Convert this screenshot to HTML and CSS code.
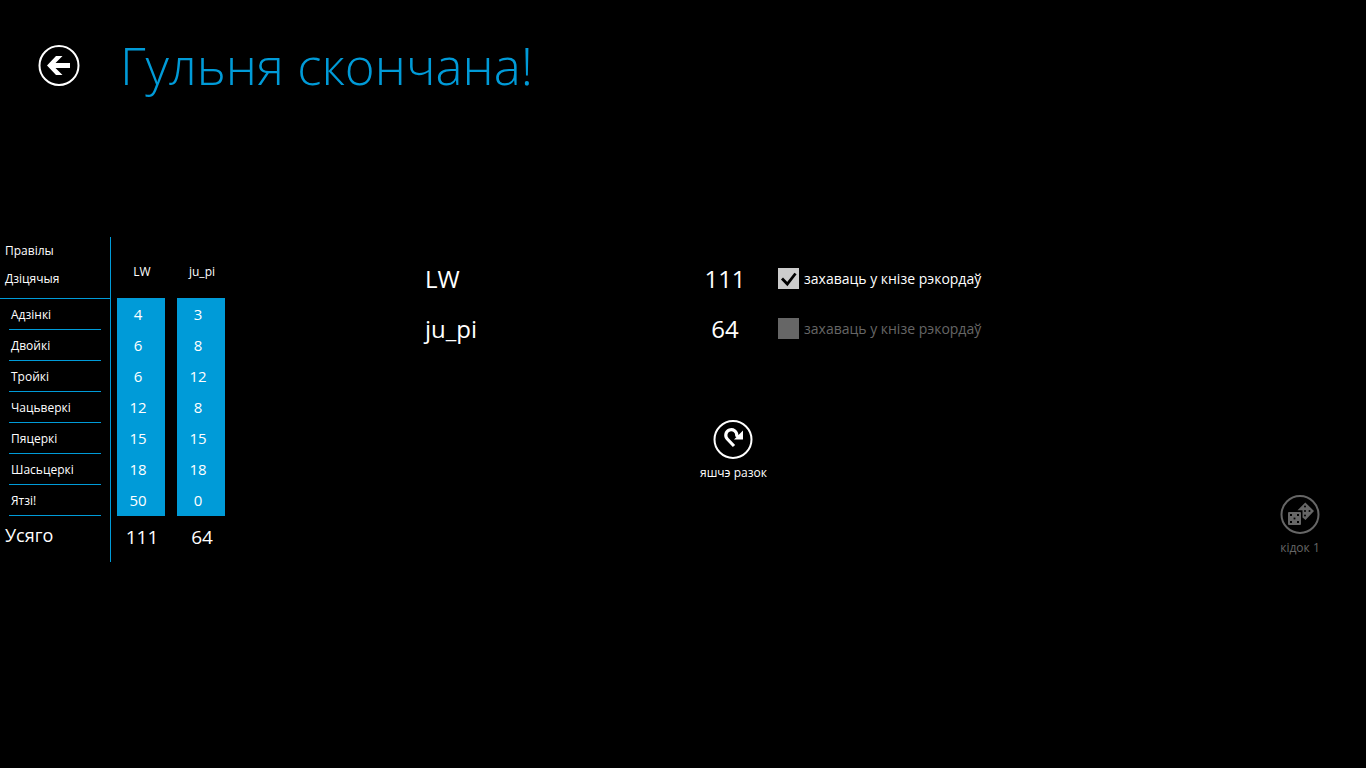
FILE: index.html
```html
<!DOCTYPE html>
<html lang="be">
<head>
<meta charset="utf-8">
<title>Гульня скончана!</title>
<link rel="stylesheet" href="styles.css">
</head>
<body>
<header class="page-header">
  <button class="icon-button" type="button" aria-label="Назад">
    <svg class="back-icon" viewBox="0 0 42 42" aria-hidden="true">
      <circle cx="21" cy="21.500" r="19.500" fill="none" stroke="currentColor" stroke-width="2"/>
      <path d="M9 21.500 L18 12 H24.500 L17.500 19 H32 V24 H17.500 L24.500 31 H18 Z" fill="currentColor"/>
    </svg>
  </button>
  <h1 class="title">Гульня скончана!</h1>
</header>
<main class="content">
  <table class="scoreboard">
    <thead>
      <tr>
        <th class="rules"><span class="rule-line">Правілы</span><span class="rule-line">Дзіцячыя</span></th>
        <th class="player" scope="col">LW</th>
        <th class="player" scope="col">ju_pi</th>
      </tr>
    </thead>
    <tbody>
      <tr><th class="category" scope="row"><span class="category-name">Адзінкі</span></th><td class="cell"><span class="points">4</span></td><td class="cell"><span class="points">3</span></td></tr>
      <tr><th class="category" scope="row"><span class="category-name">Двойкі</span></th><td class="cell"><span class="points">6</span></td><td class="cell"><span class="points">8</span></td></tr>
      <tr><th class="category" scope="row"><span class="category-name">Тройкі</span></th><td class="cell"><span class="points">6</span></td><td class="cell"><span class="points">12</span></td></tr>
      <tr><th class="category" scope="row"><span class="category-name">Чацьверкі</span></th><td class="cell"><span class="points">12</span></td><td class="cell"><span class="points">8</span></td></tr>
      <tr><th class="category" scope="row"><span class="category-name">Пяцеркі</span></th><td class="cell"><span class="points">15</span></td><td class="cell"><span class="points">15</span></td></tr>
      <tr><th class="category" scope="row"><span class="category-name">Шасьцеркі</span></th><td class="cell"><span class="points">18</span></td><td class="cell"><span class="points">18</span></td></tr>
      <tr><th class="category" scope="row"><span class="category-name">Ятзі!</span></th><td class="cell"><span class="points">50</span></td><td class="cell"><span class="points">0</span></td></tr>
    </tbody>
    <tfoot>
      <tr><th class="total-label" scope="row">Усяго</th><td class="total">111</td><td class="total">64</td></tr>
    </tfoot>
  </table>

  <section class="results">
    <div class="result">
      <span class="name">LW</span>
      <span class="score">111</span>
      <label class="save" for="save-1"><input class="check" type="checkbox" id="save-1" checked>захаваць у кнізе рэкордаў</label>
    </div>
    <div class="result">
      <span class="name">ju_pi</span>
      <span class="score">64</span>
      <label class="save save-disabled" for="save-2"><input class="check" type="checkbox" id="save-2" disabled>захаваць у кнізе рэкордаў</label>
    </div>
    <div class="again">
      <button class="icon-button" type="button">
        <svg class="command-icon" viewBox="0 0 40 40" aria-hidden="true">
          <circle cx="20" cy="20.500" r="18.500" fill="none" stroke="currentColor" stroke-width="2"/>
          <path d="M21 27 L14.300 20 A5.500 5.500 0 1 1 23.800 16.500 L26 18" fill="none" stroke="currentColor" stroke-width="3.200"/>
          <path d="M30 11.500 V20.500 H21 Z" fill="currentColor"/>
        </svg>
        <span class="command-label">яшчэ разок</span>
      </button>
    </div>
  </section>

  <div class="throw">
    <button class="icon-button" type="button" disabled>
      <svg class="command-icon" viewBox="0 0 40 40" aria-hidden="true">
        <circle cx="20" cy="20.500" r="18.500" fill="none" stroke="currentColor" stroke-width="2"/>
        <path d="M17.500 16.300 L25.300 8.500 L34 17 L25.500 26 L22.500 23.500 V16.300 Z" fill="currentColor"/>
        <rect x="8" y="18" width="13" height="13" rx="1" fill="currentColor"/>
        <g fill="#000">
          <rect x="10" y="20" width="2" height="2"/><rect x="17" y="20" width="2" height="2"/>
          <rect x="13.600" y="23.600" width="1.800" height="1.800"/>
          <rect x="10" y="27" width="2" height="2"/><rect x="17" y="27" width="2" height="2"/>
          <circle cx="25" cy="12.500" r="1"/><circle cx="25" cy="17" r="1"/><circle cx="25" cy="21.500" r="1"/><circle cx="29.500" cy="17" r="1"/>
        </g>
      </svg>
      <span class="command-label">кідок 1</span>
    </button>
  </div>
</main>
</body>
</html>
```
FILE: styles.css
```css
* { box-sizing: border-box; }

body {
  margin: 0;
  background: #000;
  color: #fff;
  font-family: "Segoe UI", "Open Sans", "Noto Sans", sans-serif;
  font-size: 12px;
}

.page-header {
  display: flex;
  align-items: center;
  gap: 40px;
  padding: 28px 38px 0;
}

.icon-button {
  display: flex;
  flex-direction: column;
  align-items: center;
  gap: 6px;
  margin: 0;
  padding: 0;
  border: 0;
  background: none;
  color: inherit;
  font: inherit;
  cursor: pointer;
}

.icon-button:disabled { color: #666; cursor: default; }

.back-icon { display: block; width: 42px; height: 42px; }
.command-icon { display: block; width: 40px; height: 40px; }
.command-label { line-height: 16px; white-space: nowrap; }

.title {
  margin: 0;
  color: #009bd8;
  font-size: 51px;
  font-weight: 300;
  line-height: 74px;
}

.content {
  display: flex;
  align-items: flex-start;
  padding-top: 135px;
}

.scoreboard {
  flex: none;
  border-spacing: 0;
  line-height: 16px;
}

.scoreboard th { font-weight: 400; }

.scoreboard th,
.scoreboard td { padding: 0; }

.scoreboard th:first-child {
  width: 111px;
  border-right: 1px solid #009bd8;
  text-align: left;
}

.scoreboard .rules { height: 61px; padding-bottom: 5px; }

.rule-line {
  display: block;
  padding-left: 5px;
  line-height: 28px;
}

.scoreboard .player { width: 60px; padding: 8px 0 0 2px; text-align: center; }

tbody tr:first-child .category { border-top: 1px solid #009bd8; }

.category-name {
  display: block;
  height: 31px;
  margin: 0 9px;
  padding-left: 2px;
  border-bottom: 1px solid #009bd8;
  line-height: 31px;
}

.scoreboard .cell { height: 31px; padding: 0 6px; }

.points {
  display: block;
  padding-right: 6px;
  background: #009bd8;
  font-size: 15px;
  line-height: 31px;
  text-align: center;
}

tbody tr:first-child .points { line-height: 32px; }

.scoreboard .total-label {
  height: 46px;
  padding: 0 0 8px 5px;
  font-size: 18px;
}

.scoreboard .total { padding: 0 0 4px 2px; font-size: 19px; text-align: center; }

.results {
  flex: 1;
  margin-left: 194px;
  padding-top: 17px;
}

.result {
  display: grid;
  grid-template-columns: 240px 120px auto;
  justify-content: start;
  align-items: center;
  height: 50px;
}

.name,
.score { font-size: 24px; line-height: 32px; }

.score { text-align: center; }

.save {
  display: flex;
  align-items: center;
  gap: 5px;
  margin-left: -7px;
  padding-bottom: 2px;
  font-size: 14px;
  white-space: nowrap;
}

.save-disabled { color: #666; }

.check {
  appearance: none;
  width: 21px;
  height: 21px;
  margin: 0;
  background: #ccc;
}

.check:checked {
  background: #ccc url("data:image/svg+xml,%3Csvg xmlns='http://www.w3.org/2000/svg' viewBox='0 0 21 21'%3E%3Cpath d='M4 10.500l5.300 5.500L17.500 5.500' fill='none' stroke='%23000' stroke-width='2.800'/%3E%3C/svg%3E");
}

.check:disabled { background: #666; }

.again { display: flex; padding: 65px 0 0 275px; }

.throw { padding: 257px 46px 0 0; }
```
